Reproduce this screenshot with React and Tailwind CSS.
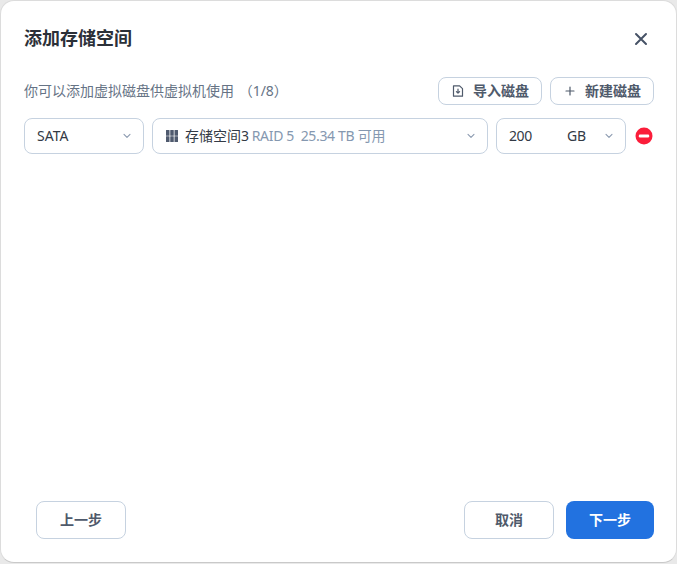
import React from "react";

function Chevron({ className = "" }) {
  return (
    <svg width="10" height="10" viewBox="0 0 10 10" fill="none" stroke="#8c9bb0" strokeWidth="1.1" className={className}>
      <path d="M2 3.4 L5 6.4 L8 3.4" strokeLinecap="round" strokeLinejoin="round" />
    </svg>
  );
}

function OutlineBtn({ children, className = "" }) {
  return (
    <button className={"flex items-center justify-center rounded-[8px] border border-[#c6d2e0] bg-white font-bold text-[#4f5a6b] " + className}>
      {children}
    </button>
  );
}

export default function App() {
  return (
    <div className="w-[677px] h-[564px] bg-[#e9e9e9] font-['Noto_Sans','Noto_Sans_CJK_SC',sans-serif]">
      <div className="flex flex-col w-[677px] h-[563px] rounded-[14px] bg-white border border-[#dcdcdc] border-b-[#c9c9c9] pl-[23px] pr-[22px] pb-[23px]">
        <div className="flex items-center justify-between h-[75px] shrink-0">
          <h1 className="text-[18px] leading-[26px] font-bold text-[#2b3038] -mt-[2px]">添加存储空间</h1>
          <svg width="14" height="14" viewBox="0 0 14 14" fill="none" stroke="#465266" strokeWidth="2" strokeLinecap="round" className="mr-[6px]">
            <path d="M2 2 L12 12 M12 2 L2 12" />
          </svg>
        </div>
        <div className="flex items-center justify-between h-[30px] shrink-0">
          <span className="text-[14px] text-[#667385] whitespace-pre -mt-[2px]">你可以添加虚拟磁盘供虚拟机使用 <span className="ml-[1px]">（1/8）</span></span>
          <div className="flex gap-2">
            <OutlineBtn className="w-[104px] h-[28px] text-[14px] gap-2">
              <svg width="14" height="14" viewBox="0 0 14 14" fill="none" stroke="#4f5a6b" strokeWidth="1.2" strokeLinejoin="round" strokeLinecap="round">
                <path d="M2.5 1.8 H8.6 L11.5 4.7 V12.2 H2.5 Z" />
                <path d="M7 5 V9 M5.4 7.6 L7 9.2 L8.6 7.6" />
              </svg>
              <span className="-mt-[2px]">导入磁盘</span>
            </OutlineBtn>
            <OutlineBtn className="w-[104px] h-[28px] text-[14px] gap-2">
              <svg width="14" height="14" viewBox="0 0 14 14" fill="none" stroke="#4f5a6b" strokeWidth="1.2" strokeLinecap="round">
                <path d="M7 3 V11 M3 7 H11" />
              </svg>
              <span className="-mt-[2px]">新建磁盘</span>
            </OutlineBtn>
          </div>
        </div>
        <div className="flex items-center gap-2 mt-[12px] shrink-0 text-[14px] text-[#333a45]">
          <div className="flex items-center justify-between w-[120px] h-[36px] rounded-[8px] border border-[#c6d2e0] pl-[12px] pr-[11px]">
            <span className="-mt-[2px]">SATA</span>
            <Chevron />
          </div>
          <div className="flex items-center justify-between w-[336px] h-[36px] rounded-[8px] border border-[#c6d2e0] pl-[13px] pr-[11px]">
            <div className="flex items-center whitespace-pre">
              <svg width="12" height="12" viewBox="0 0 12 12" fill="#4f5a6e" className="mr-[7px]">
                <rect x="0" y="0" width="3.5" height="5.8" rx="0.3" />
                <rect x="4.25" y="0" width="3.5" height="5.8" rx="0.3" />
                <rect x="8.5" y="0" width="3.5" height="5.8" rx="0.3" />
                <rect x="0" y="6.2" width="3.5" height="5.8" rx="0.3" />
                <rect x="4.25" y="6.2" width="3.5" height="5.8" rx="0.3" />
                <rect x="8.5" y="6.2" width="3.5" height="5.8" rx="0.3" />
              </svg>
              <span className="-mt-[2px]">存储空间<span className="tracking-[-0.6px]">3</span></span>
              <span className="text-[#8598b0] -mt-[2px]"><span className="tracking-[-0.33px]"> RAID 5  25.34 TB </span>可用</span>
            </div>
            <Chevron />
          </div>
          <div className="flex items-center w-[130px] h-[36px] rounded-[8px] border border-[#c6d2e0] pl-[12px] pr-[11px]">
            <span className="w-[58px] -mt-[2px] tracking-[-0.4px]">200</span>
            <span className="-mt-[2px] tracking-[-0.3px]">GB</span>
            <Chevron className="ml-auto" />
          </div>
          <svg width="18" height="18" viewBox="0 0 18 18" className="ml-[1px] -mt-[1px]">
            <circle cx="9" cy="9" r="8.5" fill="#fb1d3a" />
            <rect x="3.8" y="7.5" width="10.4" height="3" rx="1.2" fill="#fff" />
          </svg>
        </div>
        <div className="flex-1" />
        <div className="flex items-center justify-between pl-[12px] shrink-0 text-[14px]">
          <OutlineBtn className="w-[90px] h-[38px] pb-[2px]">上一步</OutlineBtn>
          <div className="flex gap-3">
            <OutlineBtn className="w-[90px] h-[38px] pb-[2px]">取消</OutlineBtn>
            <button className="w-[88px] h-[38px] pb-[2px] rounded-[8px] bg-[#2272e0] text-white font-bold">下一步</button>
          </div>
        </div>
      </div>
    </div>
  );
}
